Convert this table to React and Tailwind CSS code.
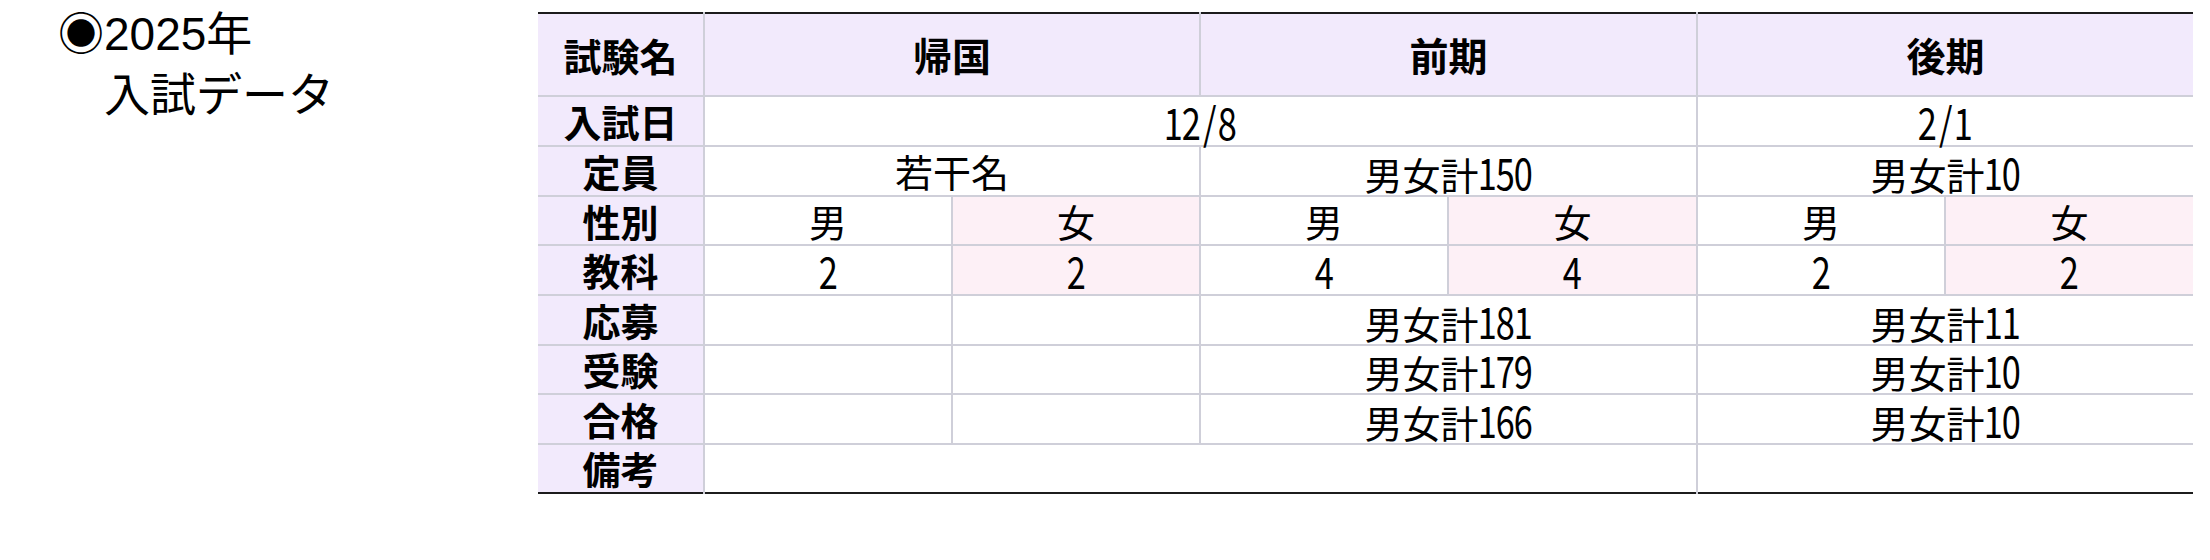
const font = { fontFamily: "'Noto Sans CJK JP', sans-serif" };

const rows = [
  { label: '応募', zenki: '男女計181', koki: '男女計11' },
  { label: '受験', zenki: '男女計179', koki: '男女計10' },
  { label: '合格', zenki: '男女計166', koki: '男女計10' },
];

// the reference uses a condensed face for digits: tall and narrow
function Txt({ text }) {
  if (!text) return null;
  return (
    <span className="inline-flex items-baseline">
      {[...text].map((ch, i) =>
        /[0-9/]/.test(ch) ? (
          <span key={i} className="inline-flex w-[18px] justify-center">
            <span className="inline-block scale-x-[0.78] text-[44px]">{ch}</span>
          </span>
        ) : (
          <span key={i}>{ch}</span>
        )
      )}
    </span>
  );
}

function Label({ children, top }) {
  return (
    <td
      className={`bg-[#f2eafc] border-b-2 border-r-2 border-[#cfcfd9] text-center font-bold text-[38px] leading-none ${top ? 'border-t-2 border-t-[#1c1c1c]' : ''}`}
    >
      {children}
    </td>
  );
}

function Head({ children, last }) {
  return (
    <td
      colSpan={2}
      className={`bg-[#f2eafc] border-t-2 border-t-[#1c1c1c] border-b-2 border-[#cfcfd9] text-center font-bold text-[39px] leading-none ${last ? '' : 'border-r-2'}`}
    >
      {children}
    </td>
  );
}

function Cell({ text, span = 1, pink, last }) {
  return (
    <td
      colSpan={span}
      className={`border-b-2 border-[#cfcfd9] text-center text-[38px] leading-none ${pink ? 'bg-[#fdf0f6]' : 'bg-white'} ${last ? '' : 'border-r-2'}`}
    >
      <Txt text={text} />
    </td>
  );
}

export default function App() {
  return (
    <div className="w-[2210px] h-[560px] bg-white flex text-black">
      {/* title */}
      <div
        className="w-[538px] pl-[58px] pt-[4px] text-[46px] leading-[61px]"
        style={{ fontFamily: "'Liberation Sans', 'Noto Sans CJK JP', sans-serif" }}
      >
        <div>◉2025年</div>
        <div>　入試データ</div>
      </div>

      {/* table */}
      <div className="pt-[12px]">
        <table className="w-[1655px] table-fixed border-collapse border-b-2 border-b-[#1c1c1c]" style={font}>
          <colgroup>
            <col className="w-[166px]" />
            <col className="w-[248px]" />
            <col className="w-[248px]" />
            <col className="w-[248px]" />
            <col className="w-[249px]" />
            <col className="w-[248px]" />
            <col className="w-[248px]" />
          </colgroup>
          <tbody>
            <tr className="h-[83px]">
              <Label top>試験名</Label>
              <Head>帰国</Head>
              <Head>前期</Head>
              <Head last>後期</Head>
            </tr>
            <tr className="h-[50px]">
              <Label>入試日</Label>
              <Cell span={4} text="12/8" />
              <Cell span={2} last text="2/1" />
            </tr>
            <tr className="h-[50px]">
              <Label>定員</Label>
              <Cell span={2} text="若干名" />
              <Cell span={2} text="男女計150" />
              <Cell span={2} last text="男女計10" />
            </tr>
            <tr className="h-[49px]">
              <Label>性別</Label>
              <Cell text="男" />
              <Cell pink text="女" />
              <Cell text="男" />
              <Cell pink text="女" />
              <Cell text="男" />
              <Cell pink last text="女" />
            </tr>
            <tr className="h-[50px]">
              <Label>教科</Label>
              <Cell text="2" />
              <Cell pink text="2" />
              <Cell text="4" />
              <Cell pink text="4" />
              <Cell text="2" />
              <Cell pink last text="2" />
            </tr>
            {rows.map((r) => (
              <tr key={r.label} className="h-[49.5px]">
                <Label>{r.label}</Label>
                <Cell />
                <Cell />
                <Cell span={2} text={r.zenki} />
                <Cell span={2} last text={r.koki} />
              </tr>
            ))}
            <tr className="h-[49px]">
              <td className="bg-[#f2eafc] border-r-2 border-[#cfcfd9] text-center font-bold text-[38px] leading-none">備考</td>
              <td colSpan={4} className="border-r-2 border-[#cfcfd9]"></td>
              <td colSpan={2}></td>
            </tr>
          </tbody>
        </table>
      </div>
    </div>
  );
}
